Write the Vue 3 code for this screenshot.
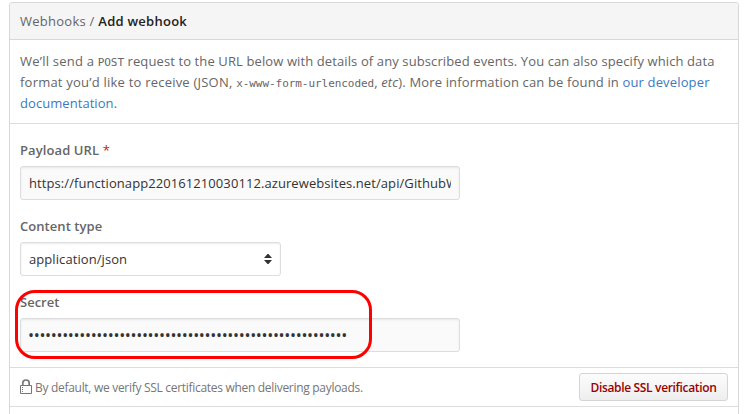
<script setup>
const payloadUrl = 'https://functionapp220161210030112.azurewebsites.net/api/GithubWebhook'
const secret = '•'.repeat(56)
</script>

<template>
  <main class="panel">
    <header class="head"><span class="crumb">Webhooks /</span> <strong>Add webhook</strong></header>
    <section class="intro">
      <div class="l1"><span class="wide">We’ll send a </span><code>POST</code> request to the URL below with details of any subscribed events. You can also specify which data</div>
      <div class="l2"><span class="wide">format you’d like to receive (JSON, </span><code>x-www-form-urlencoded</code>, <em>etc</em>). More information can be found in <a>our developer</a></div>
      <div class="l3"><a>documentation</a>.</div>
    </section>
    <section class="form">
      <div class="field">
        <label class="lb-url">Payload URL <i>*</i></label>
        <div class="input"><span class="clip url">{{ payloadUrl }}</span></div>
      </div>
      <div class="field">
        <label class="lb-type">Content type</label>
        <div class="input select">
          <span class="clip json">application/json</span>
          <svg width="8" height="10" viewBox="0 0 8 10"><path d="M0 4L3.5 0H4.5L8 4ZM0 6H8L4.5 10H3.5Z" fill="#333" /></svg>
        </div>
      </div>
      <div class="field secret">
        <label class="lb-secret">Secret</label>
        <div class="input"><span class="clip dots">{{ secret }}</span></div>
        <div class="mark"></div>
      </div>
    </section>
    <footer class="ssl">
      <svg class="lock" width="12" height="16" viewBox="0 0 12 16">
        <path d="M2.8 7V4.2a3.2 3.2 0 0 1 6.4 0V7" fill="none" stroke="#767676" stroke-width="1.7" />
        <path d="M.5 6.5H11.5V14.5H.5Z" fill="#fff" stroke="#767676" />
        <path d="M2 8.5H3M2 10.5H3M2 12.5H3" stroke="#767676" />
      </svg>
      <span class="note">By default, we verify SSL certificates when delivering payloads.</span>
      <button><span>Disable SSL verification</span></button>
    </footer>
  </main>
</template>

<style>
body { background: #fff; overflow: hidden; }
</style>

<style scoped>
.panel {
  box-sizing: border-box;
  width: 730px;
  height: 430px;
  margin: 2px 0 0 9px;
  border: 1px solid #d8d8d8;
  border-radius: 3px;
  font-family: "Open Sans", sans-serif;
  font-size: 13px;
  color: #666;
  white-space: nowrap;
}
.head {
  height: 36px;
  line-height: 37px;
  padding-left: 10px;
  background: #f5f5f5;
  border-bottom: 1px solid #d8d8d8;
  border-radius: 2px 2px 0 0;
  letter-spacing: .26px;
}
strong { color: #222; font-weight: 600; }
.intro {
  box-sizing: border-box;
  height: 84px;
  padding: 11px 0 0 10px;
  line-height: 21px;
  border-bottom: 1px solid #ddd;
}
.intro div { height: 21px; }
.wide { letter-spacing: .22px; white-space: pre; }
.l1 { letter-spacing: .11px; }
.l2 { letter-spacing: .15px; }
.l3 { letter-spacing: .06px; }
code { font-family: "DejaVu Sans Mono", monospace; font-size: 11px; letter-spacing: -.05px; }
a { color: #4078c0; }
.form {
  box-sizing: border-box;
  height: 244px;
  padding: 16px 0 0 10px;
  border-bottom: 1px solid #ddd;
}
.field { height: 76px; }
label { display: block; height: 26px; line-height: 21px; font-weight: 600; }
label i { color: #bd2c00; font-style: normal; font-weight: 400; }
.lb-url { letter-spacing: .1px; }
.lb-type { letter-spacing: .06px; }
.input {
  box-sizing: border-box;
  width: 440px;
  height: 34px;
  padding: 0 8px;
  display: flex;
  align-items: center;
  border: 1px solid #ddd;
  border-radius: 3px;
  background: #fafafa;
  box-shadow: inset 0 1px 2px rgba(0, 0, 0, .075);
  color: #333;
}
.clip { flex: 1; overflow: hidden; line-height: 22px; }
.url { letter-spacing: .08px; }
.json { letter-spacing: .08px; }
.dots { margin-left: -1px; font-size: 16px; letter-spacing: -.32px; }
.select { width: 261px; background: #fff; }
.secret { position: relative; }
.mark {
  position: absolute;
  box-sizing: border-box;
  left: -5px;
  top: -2px;
  width: 357px;
  height: 69px;
  border: 3px solid #f00;
  border-radius: 20px;
}
.ssl {
  box-sizing: border-box;
  height: 39px;
  padding: 0 10px;
  display: flex;
  align-items: center;
  border-bottom: 1px solid #ddd;
  font-size: 12px;
  color: #767676;
}
.lock { margin-right: 3px; }
.note { letter-spacing: -.3px; }
button {
  margin-left: auto;
  box-sizing: border-box;
  width: 149px;
  height: 28px;
  padding: 0;
  border: 1px solid #d5d5d5;
  border-radius: 3px;
  background: linear-gradient(#fcfcfc, #eee);
  font: 600 12px "Open Sans", sans-serif;
  letter-spacing: -.34px;
  color: #900;
}
</style>
